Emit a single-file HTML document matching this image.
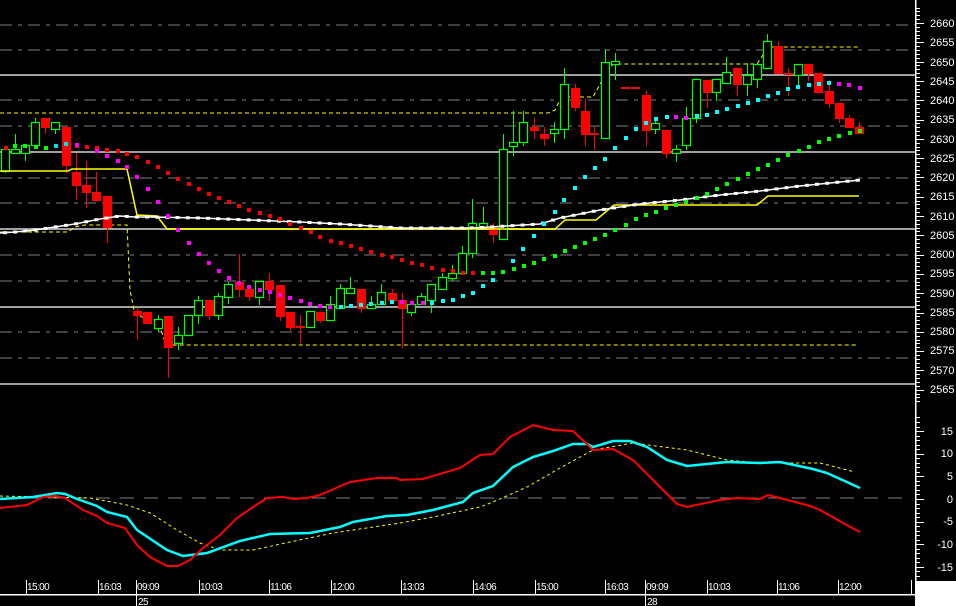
<!DOCTYPE html>
<html><head><meta charset="utf-8"><style>
html,body{margin:0;padding:0;background:#000;width:956px;height:606px;overflow:hidden}
svg{display:block}
text{font-family:"Liberation Sans",sans-serif;fill:#fff}
</style></head><body>
<svg id="s" width="956" height="606" viewBox="0 0 956 606" xmlns="http://www.w3.org/2000/svg">
<rect width="956" height="606" fill="#000"/>
<g id="g"></g>
<text x="930" y="27" font-size="11">2660</text>
<text x="930" y="46" font-size="11">2655</text>
<text x="930" y="66" font-size="11">2650</text>
<text x="930" y="85" font-size="11">2645</text>
<text x="930" y="104" font-size="11">2640</text>
<text x="930" y="123" font-size="11">2635</text>
<text x="930" y="143" font-size="11">2630</text>
<text x="930" y="162" font-size="11">2625</text>
<text x="930" y="181" font-size="11">2620</text>
<text x="930" y="200" font-size="11">2615</text>
<text x="930" y="220" font-size="11">2610</text>
<text x="930" y="239" font-size="11">2605</text>
<text x="930" y="258" font-size="11">2600</text>
<text x="930" y="277" font-size="11">2595</text>
<text x="930" y="297" font-size="11">2590</text>
<text x="930" y="316" font-size="11">2585</text>
<text x="930" y="335" font-size="11">2580</text>
<text x="930" y="354" font-size="11">2575</text>
<text x="930" y="374" font-size="11">2570</text>
<text x="930" y="393" font-size="11">2565</text>
<g font-size="11" text-anchor="end">
<text x="953" y="435">15</text>
<text x="953" y="457">10</text>
<text x="953" y="480">5</text>
<text x="953" y="503">0</text>
<text x="953" y="525">-5</text>
<text x="953" y="548">-10</text>
<text x="953" y="571">-15</text>
</g>
<g font-size="10" letter-spacing="-0.6">
<text x="27" y="590">15:00</text>
<text x="99" y="590">16:03</text>
<text x="137" y="590">09:09</text>
<text x="200" y="590">10:03</text>
<text x="270" y="590">11:06</text>
<text x="332" y="590">12:00</text>
<text x="402" y="590">13:03</text>
<text x="474" y="590">14:06</text>
<text x="536" y="590">15:00</text>
<text x="606" y="590">16:03</text>
<text x="646" y="590">09:09</text>
<text x="708" y="590">10:03</text>
<text x="778" y="590">11:06</text>
<text x="839" y="590">12:00</text>
<text x="138" y="605">25</text>
<text x="647" y="605">28</text>
</g>
</svg>
<script>
var g=document.getElementById('g'),h='';
function L(x1,y1,x2,y2,c,w,d){h+='<line x1="'+x1+'" y1="'+y1+'" x2="'+x2+'" y2="'+y2+'" stroke="'+c+'" stroke-width="'+(w||1)+'"'+(d?' stroke-dasharray="'+d+'"':'')+' shape-rendering="crispEdges"/>';}
function P(pts,c,w,d){h+='<polyline fill="none" points="'+pts.map(function(p){return p.join(',')}).join(' ')+'" stroke="'+c+'" stroke-width="'+(w||1)+'"'+(d?' stroke-dasharray="'+d+'"':'')+'/>';}
function D(x,y,c){h+='<rect x="'+(x-2)+'" y="'+(y-2)+'" width="4" height="4" fill="'+c+'"/>';}
// grid
var gy=[25,50,75,100,126,152,178,203,229,255,281,307,332,358,384];
gy.forEach(function(y,i){ if(i%3==2) L(0,y,915,y,'#a0a0a0',2); else L(0,y,915,y,'#808080',1,'12,6,4,6');});
L(0,498,912,498,'#808080',1,'14,10');
// yellow dashed bands
P([[0,113],[548,113],[555,110],[560,100],[563,97],[593,97],[603,79],[613,64],[757,64],[767,49],[770,47],[858,47]],'#ffff00',1,'4,3');
P([[0,232],[68,232],[75,227],[85,225],[127,225],[130,290],[134,310],[137,316],[153,319],[160,327],[164,339],[167,345],[858,345]],'#ffff00',1,'4,3');
// candles
var C=[[5,149,171,147,172,'g'],[15,149,153,134,153,'g'],[25,145,153,145,160,'g'],[35,122,145,118,145,'g'],[45,118,127,118,133,'r'],[55,122,129,122,133,'g'],[66,127,165,127,172,'r'],[76,172,185,153,199,'r'],[86,185,192,161,207,'r'],[96,192,200,172,200,'r'],[107,196,227,196,242,'r'],[137,311,315,308,339,'r'],[147,312,323,312,323,'r'],[158,319,328,315,331,'g'],[168,316,347,316,377,'r'],[178,335,343,327,349,'g'],[188,315,335,315,335,'g'],[198,300,315,296,323,'g'],[209,300,315,300,319,'r'],[218,296,315,293,319,'g'],[228,284,297,282,303,'g'],[239,282,289,254,296,'r'],[249,289,296,289,300,'r'],[259,281,297,281,304,'g'],[269,281,289,273,300,'r'],[280,285,316,285,320,'r'],[290,312,327,312,330,'r'],[300,326,327,315,342,'r'],[310,311,327,311,327,'g'],[320,312,320,312,322,'r'],[330,304,320,296,320,'g'],[340,288,308,284,308,'g'],[350,288,293,277,293,'g'],[361,289,308,289,312,'r'],[371,304,308,296,308,'g'],[381,292,304,284,304,'g'],[392,293,300,289,300,'r'],[402,300,308,293,347,'r'],[411,304,312,304,315,'g'],[421,296,304,293,304,'g'],[431,284,300,284,312,'g'],[442,277,289,273,289,'g'],[452,273,278,265,280,'g'],[462,253,273,246,273,'g'],[472,223,253,199,257,'g'],[483,223,227,207,227,'g'],[493,227,234,223,242,'r'],[503,149,239,134,239,'g'],[513,142,146,111,155,'g'],[523,122,142,111,145,'g'],[534,127,130,118,138,'r'],[544,134,138,127,145,'r'],[554,129,133,122,142,'g'],[564,84,129,68,138,'g'],[575,88,107,84,110,'r'],[585,111,134,99,145,'r'],[594,133,134,126,149,'r'],[605,62,138,49,138,'g'],[615,61,64,53,79,'g'],[625,87,88,87,88,'r'],[635,87,88,87,88,'r'],[646,95,130,91,145,'r'],[655,123,129,118,133,'g'],[666,130,153,130,157,'r'],[676,149,153,145,161,'g'],[686,118,145,107,149,'g'],[696,79,118,79,122,'g'],[707,80,92,80,107,'r'],[716,79,92,79,100,'g'],[726,72,83,57,83,'g'],[737,68,84,68,95,'r'],[747,75,84,63,95,'g'],[757,64,79,64,87,'g'],[767,41,68,34,68,'g'],[778,46,73,41,73,'r'],[788,73,74,68,95,'r'],[798,64,75,64,87,'g'],[808,64,73,64,80,'r'],[818,73,92,73,92,'r'],[829,91,103,80,107,'r'],[839,103,118,103,122,'r'],[849,118,127,115,127,'r'],[859,127,133,122,133,'r']];
C.forEach(function(c){var x=c[0],col=c[5]=='g'?'#00ff00':'#ff0000';
 L(x+0.5,c[3],x+0.5,c[4]+1,col,1);
 if(c[5]=='g'){h+='<rect x="'+(x-3.5)+'" y="'+(c[1]+0.5)+'" width="8" height="'+Math.max(1,c[2]-c[1])+'" fill="#000" stroke="#00ff00" stroke-width="1.2"/>';}
 else{h+='<rect x="'+(x-4)+'" y="'+c[1]+'" width="9" height="'+Math.max(2,c[2]-c[1]+1)+'" fill="#ff0000"/>';}
});
// yellow solid step
P([[0,171],[68,171],[72,169],[127,169],[137,215],[157,216],[167,229],[555,229],[565,220],[596,220],[614,205],[757,205],[768,196],[859,196]],'#ffff00',1.5);
// white MA
var W=[[0,233],[15,232],[35,230],[55,227],[75,224],[100,219],[120,216],[135,217],[150,217],[200,218],[250,220],[300,222],[340,224],[400,228],[470,228],[490,227],[540,224],[560,218],[600,210],[640,204],[680,200],[720,195],[760,191],[800,186],[840,182],[860,180]];
P(W,'#ffffff',1.5);
for(var x=5;x<=860;x+=10.15){var y=0;for(var i=0;i<W.length-1;i++){if(x>=W[i][0]&&x<=W[i+1][0]){y=W[i][1]+(W[i+1][1]-W[i][1])*(x-W[i][0])/(W[i+1][0]-W[i][0]);}} h+='<rect x="'+(x-2)+'" y="'+(y-1.5)+'" width="4" height="3" fill="#fff"/>';}
// SAR dots
[[15,146],[25,146],[36,147],[46,148]].forEach(function(p){D(p[0],p[1],'#00ff00')});
[[56,146],[66,144]].forEach(function(p){D(p[0],p[1],'#00e0e0')});
[[6,148],[77,146],[87,147],[97,148],[107,150],[118,151],[127,154],[137,157],[148,162],[158,167],[168,173],[178,179],[189,184],[199,189],[209,194],[219,198],[229,202],[239,206],[249,210],[260,213],[270,216],[280,219],[290,224],[301,228],[311,232],[320,237],[331,241],[341,243],[351,246],[361,249],[371,252],[382,255],[392,257],[402,260],[412,263],[422,265],[432,268],[443,270],[453,271],[463,273],[473,273]].forEach(function(p){D(p[0],p[1],'#ff0000')});
[[77,145],[97,151],[107,156],[118,161],[127,167],[137,177],[148,189],[158,202],[168,216],[178,230],[189,243],[199,254],[209,263],[219,271],[229,278],[239,283],[249,287],[260,290],[270,292],[280,295],[290,298],[301,301],[310,304],[320,306],[330,307],[402,302],[412,303],[423,303],[676,117],[686,118],[839,84],[849,85],[860,88]].forEach(function(p){D(p[0],p[1],'#ff00ff')});
[[341,307],[351,306],[361,305],[371,304],[382,303],[392,302],[432,303],[443,301],[453,300],[463,296],[473,293],[483,286],[493,280],[503,272],[513,261],[523,249],[534,236],[544,224],[555,212],[564,200],[575,188],[585,177],[595,168],[605,159],[615,148],[626,138],[636,129],[646,123],[656,119],[667,117],[697,116],[707,115],[717,112],[727,109],[738,106],[748,103],[758,100],[768,96],[778,93],[788,89],[798,87],[809,85],[819,84],[829,83]].forEach(function(p){D(p[0],p[1],'#00ffff')});
[[483,273],[493,273],[503,272],[514,269],[524,266],[534,263],[544,259],[555,256],[565,251],[575,247],[585,243],[595,239],[605,235],[615,230],[626,225],[636,219],[646,215],[656,212],[666,208],[676,205],[686,202],[697,198],[707,194],[717,189],[727,184],[738,179],[748,174],[758,169],[768,165],[778,160],[788,155],[799,151],[809,147],[819,142],[829,139],[839,136],[850,133],[860,131]].forEach(function(p){D(p[0],p[1],'#00ff00')});
// MACD
P([[0,496],[90,498],[127,505],[150,513],[177,530],[200,543],[220,550],[253,550],[290,542],[333,533],[400,523],[433,517],[480,507],[493,502],[527,487],[560,468],[593,450],[633,443],[687,450],[727,460],[760,463],[820,463],[855,472]],'#ffff00',1,'3,3');
P([[0,499],[33,497],[57,493],[65,494],[77,499],[97,506],[107,512],[127,517],[137,530],[167,550],[183,556],[207,553],[240,541],[270,534],[310,533],[340,527],[353,522],[387,516],[407,515],[433,510],[463,502],[473,493],[493,486],[513,467],[533,457],[553,451],[573,444],[587,444],[593,447],[613,441],[630,441],[647,447],[667,460],[687,466],[727,462],[760,463],[780,462],[813,469],[827,473],[860,488]],'#00ffff',2.5);
P([[0,508],[27,505],[43,497],[55,496],[65,498],[83,510],[97,516],[107,523],[125,528],[137,545],[150,557],[167,566],[178,566],[190,560],[203,548],[220,535],[237,518],[253,507],[267,498],[283,497],[293,499],[307,498],[320,495],[350,482],[377,478],[397,478],[400,480],[423,479],[460,468],[480,455],[493,454],[510,437],[533,425],[553,430],[573,431],[593,450],[613,449],[633,460],[660,487],[677,504],[687,507],[720,500],[737,498],[760,499],[768,495],[780,498],[810,506],[820,510],[843,523],[860,532]],'#ff0000',2);
// axes
L(915.5,0,915.5,606,'#ffffff',1.5);
for(var p=2664;p>=2562;p--){var y=Math.round(23+(2660-p)*3.86)+0.5;L(916,y,(p%5==0)?924:920,y,'#fff',1);}
for(var v=18;v>=-18;v--){var y=Math.round(499-v*4.53)+0.5;L(916,y,(v%5==0)?924:920,y,'#fff',1);}
L(0,594.5,915,594.5,'#ffffff',1.5);
[26,98,136,199,269,331,401,473,535,605,645,707,777,838,911].forEach(function(x){L(x+0.5,580,x+0.5,594,'#fff',1);});
L(136.5,594,136.5,606,'#fff',1);L(645.5,594,645.5,606,'#fff',1);
h+='<rect x="916" y="581" width="40" height="25" fill="#fff"/>';
g.innerHTML=h;
</script>
</body></html>
